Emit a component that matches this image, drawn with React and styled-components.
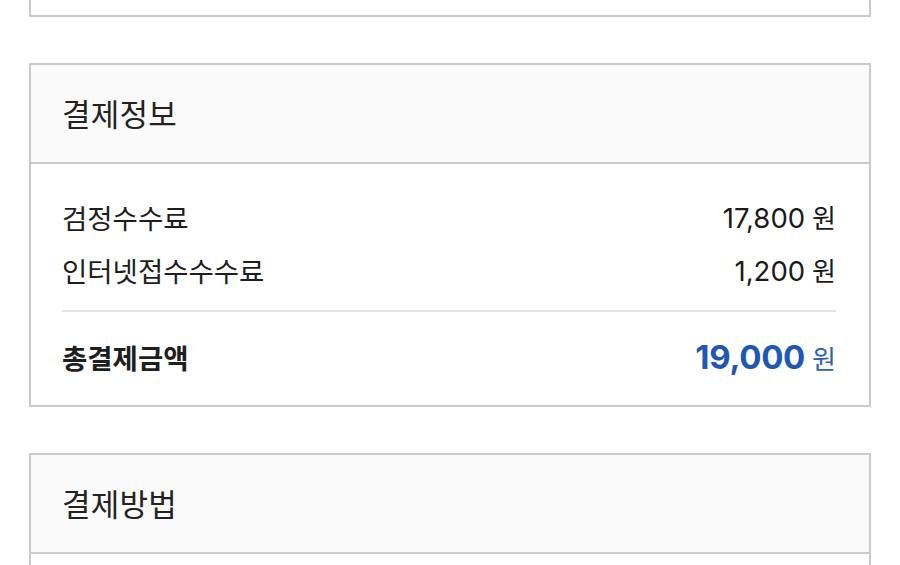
import styled, { createGlobalStyle } from 'styled-components';

const GlobalStyle = createGlobalStyle`
  html, body {
    margin: 0;
    padding: 0;
    background: #fff;
    overflow: hidden;
  }
  * {
    box-sizing: border-box;
  }
`;

const Page = styled.div`
  display: flex;
  flex-direction: column;
  gap: 46px;
  padding: 0 29px;
  margin-top: -107px; // scrolled: only the foot of the card above shows
  font-family: "Noto Sans CJK KR", "Noto Sans", sans-serif;
  color: #222;
`;

const Card = styled.section`
  border: 2px solid #cacaca;
  background: #fff;
`;

const CardHeader = styled.header`
  height: 99px;
  display: flex;
  align-items: center;
  padding: 0 31px 3px;
  background: #fafafa;
  border-bottom: 2px solid #cacaca;
  font-size: 31px;
  letter-spacing: 0.2px;
  color: #222;
`;

const CardBody = styled.div`
  padding: ${(p) => p.$pad || '26px 33px 20px 31px'};
  min-height: ${(p) => p.$minHeight || 0}px;
`;

const Row = styled.div`
  display: flex;
  align-items: center;
  justify-content: space-between;
  height: ${(p) => (p.$total ? 56 : 53)}px;
  margin-top: ${(p) => (p.$total ? 17 : 0)}px;
`;

const Label = styled.span`
  font-size: 27.5px;
  font-weight: ${(p) => (p.$bold ? 700 : 400)};
  letter-spacing: 0;
  color: #1e1e1e;
`;

const Amount = styled.span`
  display: flex;
  align-items: baseline;
  gap: 7px;
  color: ${(p) => (p.$highlight ? '#1f58b4' : '#1a1a1a')};
`;

const Number = styled.span`
  font-family: Inter, "Liberation Sans", sans-serif;
  font-size: ${(p) => (p.$highlight ? 33 : 27.5)}px;
  font-weight: ${(p) => (p.$highlight ? 700 : 400)};
  letter-spacing: ${(p) => (p.$highlight ? -0.3 : 0)}px;
`;

const Won = styled.span`
  font-size: 26px;
  color: ${(p) => (p.$highlight ? '#2f62b7' : 'inherit')};
`;

const Divider = styled.hr`
  margin: 14px 0 0;
  border: 0;
  height: 2px;
  background: #e4e4e4;
`;

const fees = [
  { label: '검정수수료', amount: '17,800' },
  { label: '인터넷접수수수료', amount: '1,200' },
];

function App() {
  return (
    <>
      <GlobalStyle />
      <Page>
        <Card>
          <CardBody $pad="0" $minHeight={120} />
        </Card>

        <Card>
          <CardHeader>결제정보</CardHeader>
          <CardBody>
            {fees.map((fee) => (
              <Row key={fee.label}>
                <Label>{fee.label}</Label>
                <Amount>
                  <Number>{fee.amount}</Number>
                  <Won>원</Won>
                </Amount>
              </Row>
            ))}
            <Divider />
            <Row $total>
              <Label $bold>총결제금액</Label>
              <Amount $highlight>
                <Number $highlight>19,000</Number>
                <Won $highlight>원</Won>
              </Amount>
            </Row>
          </CardBody>
        </Card>

        <Card>
          <CardHeader>결제방법</CardHeader>
          <CardBody $pad="0" $minHeight={120} />
        </Card>
      </Page>
    </>
  );
}

export default App;
